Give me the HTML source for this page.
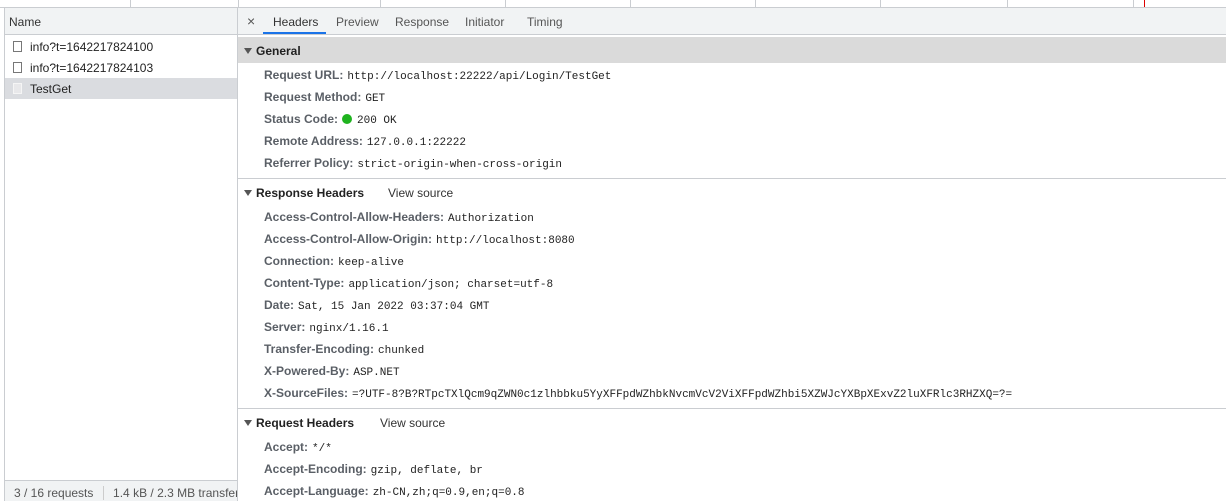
<!DOCTYPE html>
<html><head><meta charset="utf-8"><style>
*{margin:0;padding:0;box-sizing:border-box}
body{width:1226px;height:501px;overflow:hidden;background:#fff;font-family:"Liberation Sans",sans-serif;font-size:12px;color:#303942;position:relative}
.abs{position:absolute}
.tick{position:absolute;top:0;height:7px;width:1px;background:#cacdd1}
.lab{position:absolute;left:264px;color:#5a5f66;font-weight:bold;font-size:12px;white-space:nowrap;margin-top:1px}
.lab span{font-family:"Liberation Mono",monospace;font-weight:normal;color:#222;font-size:11px;margin-left:4px}
.sec{position:absolute;left:244px;font-weight:bold;color:#222;font-size:12px;margin-top:1px}
.sec:before{content:"";display:inline-block;border-left:4px solid transparent;border-right:4px solid transparent;border-top:6px solid #555;margin-right:4px;vertical-align:1px}
.vs{position:absolute;font-size:12px;color:#333;margin-top:1px}
.row{position:absolute;left:5px;width:232px;height:21px;line-height:23px;padding-left:8px;color:#222}
.row i{display:inline-block;width:9px;height:11px;border:1px solid #777;vertical-align:-1px;margin-right:8px}
</style></head><body>
<div class="tick" style="left:130px"></div><div class="tick" style="left:238px"></div><div class="tick" style="left:380px"></div><div class="tick" style="left:505px"></div><div class="tick" style="left:630px"></div><div class="tick" style="left:755px"></div><div class="tick" style="left:880px"></div><div class="tick" style="left:1007px"></div><div class="tick" style="left:1133px"></div>
<div class="abs" style="left:1144px;top:0;width:1px;height:7px;background:#d00"></div>
<div class="abs" style="left:0;top:7px;width:1226px;height:1px;background:#cacdd1"></div>
<div class="abs" style="left:4px;top:8px;width:1px;height:493px;background:#cacdd1"></div>
<div class="abs" style="left:237px;top:8px;width:1px;height:493px;background:#cacdd1"></div>
<div class="abs" style="left:5px;top:8px;width:232px;height:27px;background:#f1f3f4;border-bottom:1px solid #cacdd1;padding-left:4px;line-height:29px;color:#333">Name</div>
<div class="row" style="top:36px"><i></i>info?t=1642217824100</div>
<div class="row" style="top:57px"><i></i>info?t=1642217824103</div>
<div class="row" style="top:78px;background:#dadce0"><i style="border-color:#f5f5f5;background:#e8e8ea"></i>TestGet</div>
<div class="abs" style="left:5px;top:480px;width:232px;height:1px;background:#cacdd1"></div>
<div class="abs" style="left:5px;top:481px;width:232px;height:20px;background:#f1f3f4;line-height:25px;color:#555;padding-left:9px;white-space:nowrap;overflow:hidden">3 / 16 requests <span style="display:inline-block;width:1px;height:14px;background:#ccc;margin:0 6px;vertical-align:-3px"></span> 1.4 kB / 2.3 MB transfer</div>
<div class="abs" style="left:238px;top:8px;width:988px;height:27px;background:#f1f3f4;border-bottom:1px solid #cacdd1"></div>
<div class="abs" style="left:247px;top:13px;color:#555;font-size:14px">×</div>
<div class="abs" style="left:273px;top:15px;color:#333">Headers</div>
<div class="abs" style="left:263px;top:32px;width:63px;height:2px;background:#1a73e8"></div>
<div class="abs" style="left:336px;top:15px;color:#555">Preview</div>
<div class="abs" style="left:395px;top:15px;color:#555">Response</div>
<div class="abs" style="left:465px;top:15px;color:#555">Initiator</div>
<div class="abs" style="left:527px;top:15px;color:#555">Timing</div>
<div class="abs" style="left:238px;top:37px;width:988px;height:26px;background:#dadada"></div>
<div class="sec" style="top:43px">General</div>
<div class="lab" style="top:67px">Request URL:<span>http://localhost:22222/api/Login/TestGet</span></div>
<div class="lab" style="top:89px">Request Method:<span>GET</span></div>
<div class="lab" style="top:111px">Status Code:<span><b style="display:inline-block;width:10px;height:10px;border-radius:50%;background:#1fb31f;vertical-align:-1px;margin-right:5px"></b>200 OK</span></div>
<div class="lab" style="top:133px">Remote Address:<span>127.0.0.1:22222</span></div>
<div class="lab" style="top:155px">Referrer Policy:<span>strict-origin-when-cross-origin</span></div>
<div class="abs" style="left:238px;top:178px;width:988px;height:1px;background:#cacdd1"></div>
<div class="sec" style="top:185px">Response Headers</div><div class="vs" style="left:388px;top:185px">View source</div>
<div class="lab" style="top:209px">Access-Control-Allow-Headers:<span>Authorization</span></div>
<div class="lab" style="top:231px">Access-Control-Allow-Origin:<span>http://localhost:8080</span></div>
<div class="lab" style="top:253px">Connection:<span>keep-alive</span></div>
<div class="lab" style="top:275px">Content-Type:<span>application/json; charset=utf-8</span></div>
<div class="lab" style="top:297px">Date:<span>Sat, 15 Jan 2022 03:37:04 GMT</span></div>
<div class="lab" style="top:319px">Server:<span>nginx/1.16.1</span></div>
<div class="lab" style="top:341px">Transfer-Encoding:<span>chunked</span></div>
<div class="lab" style="top:363px">X-Powered-By:<span>ASP.NET</span></div>
<div class="lab" style="top:385px">X-SourceFiles:<span>=?UTF-8?B?RTpcTXlQcm9qZWN0c1zlhbbku5YyXFFpdWZhbkNvcmVcV2ViXFFpdWZhbi5XZWJcYXBpXExvZ2luXFRlc3RHZXQ=?=</span></div>
<div class="abs" style="left:238px;top:408px;width:988px;height:1px;background:#cacdd1"></div>
<div class="sec" style="top:415px">Request Headers</div><div class="vs" style="left:380px;top:415px">View source</div>
<div class="lab" style="top:439px">Accept:<span>*/*</span></div>
<div class="lab" style="top:461px">Accept-Encoding:<span>gzip, deflate, br</span></div>
<div class="lab" style="top:483px">Accept-Language:<span>zh-CN,zh;q=0.9,en;q=0.8</span></div>
</body></html>
